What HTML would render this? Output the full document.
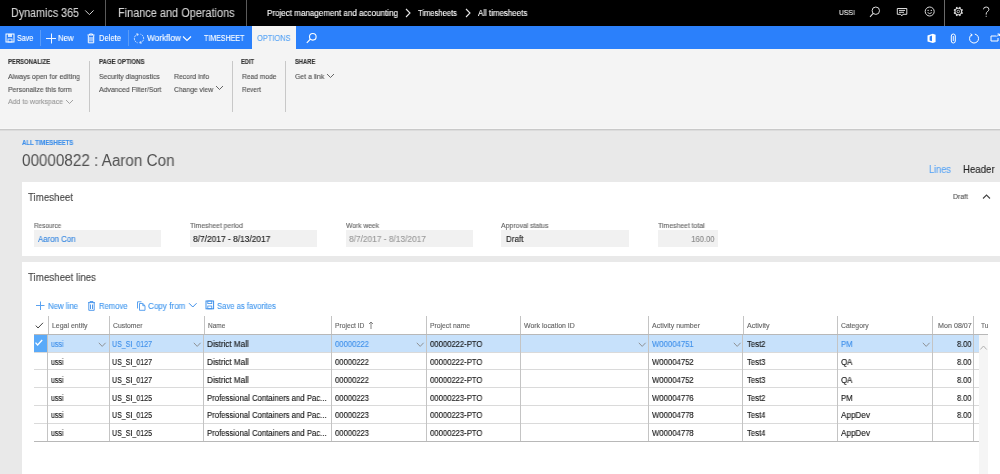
<!DOCTYPE html>
<html><head><meta charset="utf-8"><style>
html,body{margin:0;padding:0;width:1000px;height:474px;overflow:hidden;background:#e9e9e9;}
body{position:relative;font-family:"Liberation Sans", sans-serif;}
</style></head><body>
<div style="position:absolute;left:0px;top:0px;width:1000px;height:26px;background:#000;"></div>
<div style="position:absolute;left:0px;top:26px;width:1000px;height:23px;background:#2b80fb;"></div>
<div style="position:absolute;left:252px;top:26px;width:44px;height:23px;background:#f4f4f4;"></div>
<div style="position:absolute;left:0px;top:49px;width:1000px;height:79px;background:#f4f4f4;"></div>
<div style="position:absolute;left:0px;top:128px;width:1000px;height:1px;background:#f7f7f7;"></div>
<div style="position:absolute;left:0px;top:129px;width:1000px;height:1px;background:#c9c9c9;"></div>
<div style="position:absolute;left:0px;top:130px;width:1000px;height:1px;background:#dcdcdc;"></div>
<svg style="position:absolute;left:84px;top:9px;" width="12" height="8" viewBox="0 0 12 8"><path d="M1.2 1.4 L5.4 5.6 L9.6 1.4" stroke="#d4d4d4" stroke-width="1" fill="none"/></svg>
<div style="position:absolute;left:105px;top:0px;width:1px;height:26px;background:#5a5a5a;"></div>
<div style="position:absolute;left:246px;top:0px;width:1px;height:26px;background:#5a5a5a;"></div>
<svg style="position:absolute;left:404px;top:7px;" width="8" height="12" viewBox="0 0 8 12"><path d="M2 2 L6 6 L2 10" stroke="#e8e8e8" stroke-width="1.1" fill="none"/></svg>
<svg style="position:absolute;left:464px;top:7px;" width="8" height="12" viewBox="0 0 8 12"><path d="M2 2 L6 6 L2 10" stroke="#e8e8e8" stroke-width="1.1" fill="none"/></svg>
<svg style="position:absolute;left:868px;top:6px;" width="14" height="13" viewBox="0 0 14 13"><circle cx="7.8" cy="4.7" r="3.7" stroke="#dcdcdc" stroke-width="1" fill="none"/><path d="M5.2 7.4 L2 10.8" stroke="#dcdcdc" stroke-width="1.1"/></svg>
<svg style="position:absolute;left:896px;top:7px;" width="13" height="11" viewBox="0 0 13 11"><path d="M1.3 1.5 H10.8 V7.3 H6.9 L5.8 8.9 L4.7 7.3 H1.3 Z" stroke="#dcdcdc" stroke-width="1" fill="none"/><path d="M3 3.4 H9 M3 5.3 H8" stroke="#dcdcdc" stroke-width="1"/></svg>
<svg style="position:absolute;left:924px;top:6px;" width="12" height="12" viewBox="0 0 12 12"><circle cx="5.7" cy="5.5" r="4.5" stroke="#dcdcdc" stroke-width="1" fill="none"/><circle cx="4.1" cy="4.4" r="0.65" fill="#dcdcdc"/><circle cx="7.3" cy="4.4" r="0.65" fill="#dcdcdc"/><path d="M3.6 6.6 Q5.7 8.6 7.8 6.6" stroke="#dcdcdc" stroke-width="0.9" fill="none"/></svg>
<div style="position:absolute;left:944px;top:0px;width:1px;height:26px;background:#6a6a6a;"></div>
<svg style="position:absolute;left:952px;top:6px;" width="13" height="12" viewBox="0 0 13 12"><path d="M10.15 6.11 L10.95 6.69 L10.43 7.94 L9.46 7.79 L8.59 8.66 L8.74 9.63 L7.49 10.15 L6.91 9.35 L5.69 9.35 L5.11 10.15 L3.86 9.63 L4.01 8.66 L3.14 7.79 L2.17 7.94 L1.65 6.69 L2.45 6.11 L2.45 4.89 L1.65 4.31 L2.17 3.06 L3.14 3.21 L4.01 2.34 L3.86 1.37 L5.11 0.85 L5.69 1.65 L6.91 1.65 L7.49 0.85 L8.74 1.37 L8.59 2.34 L9.46 3.21 L10.43 3.06 L10.95 4.31 L10.15 4.89 Z M9.00 5.5 A2.7 2.7 0 1 0 3.60 5.5 A2.7 2.7 0 1 0 9.00 5.5 Z" fill="#d8d8d8" fill-rule="evenodd"/><circle cx="6.3" cy="5.5" r="1.3" stroke="#d8d8d8" stroke-width="0.9" fill="none"/></svg>
<svg style="position:absolute;left:982px;top:6px;" width="9" height="12" viewBox="0 0 9 12"><path d="M1.5 3.3 Q1.5 1 4.2 1 Q6.9 1 6.9 3.3 Q6.9 4.8 5.2 5.8 Q4.2 6.5 4.2 8 V8.6" stroke="#dcdcdc" stroke-width="1" fill="none"/><rect x="3.7" y="9.8" width="1" height="1" fill="#dcdcdc"/></svg>
<svg style="position:absolute;left:5px;top:33px;" width="10" height="10" viewBox="0 0 10 10"><rect x="1" y="1" width="8" height="8" stroke="#fff" stroke-width="1" fill="none"/><rect x="3" y="1" width="4" height="3" fill="#fff" opacity="0.8"/><rect x="3" y="6" width="4" height="3" stroke="#fff" stroke-width="0.8" fill="none"/></svg>
<div style="position:absolute;left:40px;top:30px;width:1px;height:16px;background:#5a9cf8;"></div>
<svg style="position:absolute;left:45px;top:33px;" width="12" height="11" viewBox="0 0 12 11"><path d="M6.5 0.5 V10.5 M1 5.5 H11" stroke="#f0f6ff" stroke-width="1"/></svg>
<svg style="position:absolute;left:86px;top:33px;" width="10" height="11" viewBox="0 0 10 11"><path d="M1.5 2 H8.5 M3.5 2 V1 H6.5 V2 M2.3 2.5 V9.8 H7.7 V2.5 M4 4 V8.5 M6 4 V8.5" stroke="#fff" stroke-width="1" fill="none"/></svg>
<div style="position:absolute;left:128px;top:30px;width:1px;height:16px;background:#5a9cf8;"></div>
<svg style="position:absolute;left:133px;top:33px;" width="12" height="12" viewBox="0 0 12 12"><path d="M5.2 1.2 A4.4 4.4 0 0 0 4.6 9.8 M6.8 9.8 A4.4 4.4 0 0 0 7.4 1.2" stroke="#e6f0ff" stroke-width="0.9" fill="none" stroke-dasharray="2 0.8"/><path d="M3.4 0.7 L5.2 1.2 L4.5 2.8 M8.6 10.3 L6.8 9.8 L7.5 8.2" stroke="#e6f0ff" stroke-width="0.8" fill="none"/></svg>
<svg style="position:absolute;left:182px;top:35px;" width="10" height="7" viewBox="0 0 10 7"><path d="M1 1.5 L5 5.5 L9 1.5" stroke="#fff" stroke-width="1.1" fill="none"/></svg>
<svg style="position:absolute;left:305px;top:32px;" width="13" height="12" viewBox="0 0 13 12"><circle cx="7.8" cy="4.8" r="3.3" stroke="#fff" stroke-width="1.1" fill="none"/><path d="M5.4 7.2 L1.8 10.8" stroke="#fff" stroke-width="1.2"/></svg>
<svg style="position:absolute;left:926px;top:33px;" width="11" height="11" viewBox="0 0 11 11"><path d="M1.5 2.6 L6.8 0.8 L9.6 1.8 V9 L6.8 10 L1.5 8.4 Z" fill="#fff"/><path d="M3.6 3.4 L6 2.6 V8.3 L3.6 7.6 Z" fill="#2b80fb"/></svg>
<svg style="position:absolute;left:950px;top:33px;" width="7" height="11" viewBox="0 0 7 11"><rect x="1.3" y="1" width="4" height="9" rx="2" stroke="#fff" stroke-width="1" fill="none"/><path d="M3.3 3 V8" stroke="#fff" stroke-width="0.9"/></svg>
<svg style="position:absolute;left:968px;top:33px;" width="12" height="11" viewBox="0 0 12 11"><path d="M6.8 1.1 A4.5 4.5 0 1 1 3.4 1.9" stroke="#fff" stroke-width="1" fill="none"/><path d="M2.5 0.8 L4.2 1.8 L3.0 3.4" stroke="#fff" stroke-width="1" fill="none"/></svg>
<svg style="position:absolute;left:990px;top:33px;" width="10" height="9" viewBox="0 0 10 9"><path d="M1 3 H6.5 M1 3 V8 H8 V5" stroke="#fff" stroke-width="1" fill="none"/><path d="M7 3.5 L9.5 1 M7.5 1 H9.5 V3" stroke="#fff" stroke-width="1" fill="none"/></svg>
<svg style="position:absolute;left:65px;top:98.5px;" width="10" height="6" viewBox="0 0 10 6"><path d="M1 1 L4.5 4.5 L8 1" stroke="#999" stroke-width="0.9" fill="none"/></svg>
<div style="position:absolute;left:89px;top:61px;width:1px;height:51px;background:#c8c8c8;"></div>
<svg style="position:absolute;left:214.8px;top:85.2px;" width="10" height="6" viewBox="0 0 10 6"><path d="M1 1 L4.5 4.5 L8 1" stroke="#555" stroke-width="0.9" fill="none"/></svg>
<div style="position:absolute;left:232px;top:61px;width:1px;height:51px;background:#c8c8c8;"></div>
<div style="position:absolute;left:285px;top:61px;width:1px;height:51px;background:#c8c8c8;"></div>
<svg style="position:absolute;left:325.7px;top:72.6px;" width="10" height="6" viewBox="0 0 10 6"><path d="M1 1 L4.5 4.5 L8 1" stroke="#555" stroke-width="0.9" fill="none"/></svg>
<div style="position:absolute;left:22px;top:182px;width:978px;height:74px;background:#fff;"></div>
<svg style="position:absolute;left:982px;top:193px;" width="10" height="7" viewBox="0 0 10 7"><path d="M1 5.5 L4.5 2 L8 5.5" stroke="#444" stroke-width="1.1" fill="none"/></svg>
<div style="position:absolute;left:33.6px;top:230px;width:127.4px;height:17px;background:#f1f1f1;"></div>
<div style="position:absolute;left:189.6px;top:230px;width:127.6px;height:16.5px;background:#f1f1f1;"></div>
<div style="position:absolute;left:345.8px;top:230px;width:127px;height:16.5px;background:#f1f1f1;"></div>
<div style="position:absolute;left:501.2px;top:230px;width:127.5px;height:17px;background:#f1f1f1;"></div>
<div style="position:absolute;left:657.5px;top:230px;width:60.5px;height:17px;background:#f1f1f1;"></div>
<div style="position:absolute;left:22px;top:262px;width:978px;height:212px;background:#fff;"></div>
<svg style="position:absolute;left:35px;top:301px;" width="10" height="10" viewBox="0 0 10 10"><path d="M5.5 0.5 V9 M1 4.5 H9.5" stroke="#5aa2f0" stroke-width="1"/></svg>
<svg style="position:absolute;left:87px;top:301px;" width="9" height="10" viewBox="0 0 9 10"><path d="M1 1.6 H8 M3 1.6 V0.6 H6 V1.6 M1.8 2 V9.3 H7.2 V2 M3.5 3.5 V8 M5.5 3.5 V8" stroke="#3d8fea" stroke-width="0.9" fill="none"/></svg>
<svg style="position:absolute;left:136px;top:301px;" width="10" height="10" viewBox="0 0 10 10"><path d="M1.5 7.5 V0.8 H5.5 M3.5 2.5 H6.8 L9 4.7 V9.3 H3.5 Z M6.8 2.5 V4.7 H9" stroke="#4a98ee" stroke-width="0.9" fill="none"/></svg>
<svg style="position:absolute;left:187.5px;top:302px;" width="10" height="7" viewBox="0 0 10 7"><path d="M1 1.2 L4.8 5 L8.6 1.2" stroke="#3d8fea" stroke-width="1" fill="none"/></svg>
<svg style="position:absolute;left:205px;top:300px;" width="10" height="10" viewBox="0 0 10 10"><rect x="1" y="1" width="7.6" height="7.8" stroke="#3d8fea" stroke-width="1" fill="none"/><rect x="2.8" y="1" width="4" height="2.6" stroke="#3d8fea" stroke-width="0.8" fill="none"/><rect x="2.8" y="6" width="4" height="2.8" stroke="#3d8fea" stroke-width="0.8" fill="none"/></svg>
<div style="position:absolute;left:48px;top:316px;width:1px;height:18px;background:#c4c4c4;"></div>
<div style="position:absolute;left:109px;top:316px;width:1px;height:18px;background:#c4c4c4;"></div>
<div style="position:absolute;left:204px;top:316px;width:1px;height:18px;background:#c4c4c4;"></div>
<div style="position:absolute;left:331px;top:316px;width:1px;height:18px;background:#c4c4c4;"></div>
<div style="position:absolute;left:426px;top:316px;width:1px;height:18px;background:#c4c4c4;"></div>
<div style="position:absolute;left:520px;top:316px;width:1px;height:18px;background:#c4c4c4;"></div>
<div style="position:absolute;left:648px;top:316px;width:1px;height:18px;background:#c4c4c4;"></div>
<div style="position:absolute;left:743px;top:316px;width:1px;height:18px;background:#c4c4c4;"></div>
<div style="position:absolute;left:837px;top:316px;width:1px;height:18px;background:#c4c4c4;"></div>
<div style="position:absolute;left:932px;top:316px;width:1px;height:18px;background:#c4c4c4;"></div>
<div style="position:absolute;left:973px;top:316px;width:1px;height:18px;background:#c4c4c4;"></div>
<div style="position:absolute;left:34px;top:335px;width:945px;height:17px;background:#c7e1fb;"></div>
<div style="position:absolute;left:34px;top:335px;width:13px;height:17px;background:#5aaaf9;"></div>
<div style="position:absolute;left:34px;top:334px;width:954px;height:1px;background:#b8b8b8;"></div>
<div style="position:absolute;left:34px;top:352px;width:945px;height:1px;background:#dadada;"></div>
<div style="position:absolute;left:34px;top:369px;width:945px;height:1px;background:#dadada;"></div>
<div style="position:absolute;left:34px;top:387px;width:945px;height:1px;background:#dadada;"></div>
<div style="position:absolute;left:34px;top:405px;width:945px;height:1px;background:#dadada;"></div>
<div style="position:absolute;left:34px;top:423px;width:945px;height:1px;background:#dadada;"></div>
<div style="position:absolute;left:34px;top:441px;width:945px;height:1px;background:#b8b8b8;"></div>
<div style="position:absolute;left:47px;top:335px;width:1px;height:106px;background:#c4c4c4;"></div>
<div style="position:absolute;left:109px;top:335px;width:1px;height:106px;background:#c4c4c4;"></div>
<div style="position:absolute;left:203px;top:335px;width:1px;height:106px;background:#c4c4c4;"></div>
<div style="position:absolute;left:331px;top:335px;width:1px;height:106px;background:#c4c4c4;"></div>
<div style="position:absolute;left:426px;top:335px;width:1px;height:106px;background:#c4c4c4;"></div>
<div style="position:absolute;left:520px;top:335px;width:1px;height:106px;background:#c4c4c4;"></div>
<div style="position:absolute;left:648px;top:335px;width:1px;height:106px;background:#c4c4c4;"></div>
<div style="position:absolute;left:742px;top:335px;width:1px;height:106px;background:#c4c4c4;"></div>
<div style="position:absolute;left:837px;top:335px;width:1px;height:106px;background:#c4c4c4;"></div>
<div style="position:absolute;left:932px;top:335px;width:1px;height:106px;background:#c4c4c4;"></div>
<div style="position:absolute;left:973px;top:335px;width:1px;height:106px;background:#c4c4c4;"></div>
<div style="position:absolute;left:979px;top:335px;width:9px;height:139px;background:#f5f5f5;"></div>
<svg style="position:absolute;left:979px;top:344px;" width="9" height="7" viewBox="0 0 9 7"><path d="M1.3 5.5 L4.5 2 L7.7 5.5" stroke="#b0b0b0" stroke-width="1" fill="none"/></svg>
<svg style="position:absolute;left:35px;top:322px;" width="9" height="8" viewBox="0 0 9 8"><path d="M0.8 3.6 L3 6 L8 0.8" stroke="#444" stroke-width="1" fill="none"/></svg>
<svg style="position:absolute;left:368px;top:321px;" width="6" height="9" viewBox="0 0 6 9"><path d="M3 1 V8 M1 3 L3 1 L5 3" stroke="#777" stroke-width="0.9" fill="none"/></svg>
<svg style="position:absolute;left:34px;top:339px;" width="13" height="8" viewBox="0 0 13 8"><path d="M1.5 3.6 L3.6 6 L8.2 1" stroke="#fff" stroke-width="1.3" fill="none"/></svg>
<svg style="position:absolute;left:98px;top:341.5px;" width="9" height="6" viewBox="0 0 9 6"><path d="M0.8 0.8 L4.2 4.4 L7.6 0.8" stroke="#888" stroke-width="0.9" fill="none"/></svg>
<svg style="position:absolute;left:192.6px;top:341.5px;" width="9" height="6" viewBox="0 0 9 6"><path d="M0.8 0.8 L4.2 4.4 L7.6 0.8" stroke="#888" stroke-width="0.9" fill="none"/></svg>
<svg style="position:absolute;left:415.6px;top:341.5px;" width="9" height="6" viewBox="0 0 9 6"><path d="M0.8 0.8 L4.2 4.4 L7.6 0.8" stroke="#888" stroke-width="0.9" fill="none"/></svg>
<svg style="position:absolute;left:638.2px;top:341.5px;" width="9" height="6" viewBox="0 0 9 6"><path d="M0.8 0.8 L4.2 4.4 L7.6 0.8" stroke="#888" stroke-width="0.9" fill="none"/></svg>
<svg style="position:absolute;left:732.5px;top:341.5px;" width="9" height="6" viewBox="0 0 9 6"><path d="M0.8 0.8 L4.2 4.4 L7.6 0.8" stroke="#888" stroke-width="0.9" fill="none"/></svg>
<svg style="position:absolute;left:922px;top:341.5px;" width="9" height="6" viewBox="0 0 9 6"><path d="M0.8 0.8 L4.2 4.4 L7.6 0.8" stroke="#888" stroke-width="0.9" fill="none"/></svg>
<div style="position:absolute;left:11.00px;top:6.94px;font-size:12px;line-height:12px;height:12px;color:#d4d4d4;font-weight:400;white-space:pre;will-change:transform;-webkit-text-stroke:0.12px #d4d4d4;transform:scaleX(0.8944);transform-origin:left top;">Dynamics 365</div>
<div style="position:absolute;left:117.80px;top:6.84px;font-size:12px;line-height:12px;height:12px;color:#d4d4d4;font-weight:400;white-space:pre;will-change:transform;-webkit-text-stroke:0.12px #d4d4d4;transform:scaleX(0.9103);transform-origin:left top;">Finance and Operations</div>
<div style="position:absolute;left:267.00px;top:9.00px;font-size:8.5px;line-height:8.5px;height:8.5px;color:#fff;font-weight:400;white-space:pre;will-change:transform;-webkit-text-stroke:0.12px #fff;transform:scaleX(0.9462);transform-origin:left top;">Project management and accounting</div>
<div style="position:absolute;left:418.00px;top:9.00px;font-size:8.5px;line-height:8.5px;height:8.5px;color:#fff;font-weight:400;white-space:pre;will-change:transform;-webkit-text-stroke:0.12px #fff;transform:scaleX(0.8940);transform-origin:left top;">Timesheets</div>
<div style="position:absolute;left:477.70px;top:9.00px;font-size:8.5px;line-height:8.5px;height:8.5px;color:#fff;font-weight:400;white-space:pre;will-change:transform;-webkit-text-stroke:0.12px #fff;transform:scaleX(0.9316);transform-origin:left top;">All timesheets</div>
<div style="position:absolute;left:838.80px;top:9.33px;font-size:8px;line-height:8px;height:8px;color:#eee;font-weight:400;white-space:pre;will-change:transform;-webkit-text-stroke:0.12px #eee;transform:scaleX(0.8569);transform-origin:left top;">USSI</div>
<div style="position:absolute;left:16.80px;top:33.88px;font-size:9px;line-height:9px;height:9px;color:#fff;font-weight:400;white-space:pre;will-change:transform;-webkit-text-stroke:0.12px #fff;transform:scaleX(0.7896);transform-origin:left top;">Save</div>
<div style="position:absolute;left:58.40px;top:33.88px;font-size:9px;line-height:9px;height:9px;color:#fff;font-weight:400;white-space:pre;will-change:transform;-webkit-text-stroke:0.12px #fff;transform:scaleX(0.8659);transform-origin:left top;">New</div>
<div style="position:absolute;left:99.00px;top:33.88px;font-size:9px;line-height:9px;height:9px;color:#fff;font-weight:400;white-space:pre;will-change:transform;-webkit-text-stroke:0.12px #fff;transform:scaleX(0.8456);transform-origin:left top;">Delete</div>
<div style="position:absolute;left:146.60px;top:33.88px;font-size:9px;line-height:9px;height:9px;color:#fff;font-weight:400;white-space:pre;will-change:transform;-webkit-text-stroke:0.12px #fff;transform:scaleX(0.9228);transform-origin:left top;">Workflow</div>
<div style="position:absolute;left:204.00px;top:33.88px;font-size:9px;line-height:9px;height:9px;color:#fff;font-weight:400;white-space:pre;will-change:transform;-webkit-text-stroke:0.12px #fff;transform:scaleX(0.7842);transform-origin:left top;">TIMESHEET</div>
<div style="position:absolute;left:257.00px;top:33.88px;font-size:9px;line-height:9px;height:9px;color:#5aa5f5;font-weight:400;white-space:pre;will-change:transform;-webkit-text-stroke:0.12px #5aa5f5;transform:scaleX(0.8293);transform-origin:left top;">OPTIONS</div>
<div style="position:absolute;left:7.60px;top:58.50px;font-size:6.5px;line-height:6.5px;height:6.5px;color:#333;font-weight:700;white-space:pre;will-change:transform;-webkit-text-stroke:0.12px #333;transform:scaleX(0.9084);transform-origin:left top;">PERSONALIZE</div>
<div style="position:absolute;left:8.00px;top:72.85px;font-size:7.5px;line-height:7.5px;height:7.5px;color:#505050;font-weight:400;white-space:pre;will-change:transform;-webkit-text-stroke:0.12px #505050;transform:scaleX(0.9285);transform-origin:left top;">Always open for editing</div>
<div style="position:absolute;left:8.00px;top:85.75px;font-size:7.5px;line-height:7.5px;height:7.5px;color:#505050;font-weight:400;white-space:pre;will-change:transform;-webkit-text-stroke:0.12px #505050;transform:scaleX(0.9082);transform-origin:left top;">Personalize this form</div>
<div style="position:absolute;left:8.00px;top:98.35px;font-size:7.5px;line-height:7.5px;height:7.5px;color:#999;font-weight:400;white-space:pre;will-change:transform;-webkit-text-stroke:0.12px #999;transform:scaleX(0.9224);transform-origin:left top;">Add to workspace</div>
<div style="position:absolute;left:98.60px;top:58.50px;font-size:6.5px;line-height:6.5px;height:6.5px;color:#333;font-weight:700;white-space:pre;will-change:transform;-webkit-text-stroke:0.12px #333;transform:scaleX(0.9265);transform-origin:left top;">PAGE OPTIONS</div>
<div style="position:absolute;left:98.60px;top:72.85px;font-size:7.5px;line-height:7.5px;height:7.5px;color:#505050;font-weight:400;white-space:pre;will-change:transform;-webkit-text-stroke:0.12px #505050;transform:scaleX(0.9100);transform-origin:left top;">Security diagnostics</div>
<div style="position:absolute;left:98.60px;top:85.75px;font-size:7.5px;line-height:7.5px;height:7.5px;color:#505050;font-weight:400;white-space:pre;will-change:transform;-webkit-text-stroke:0.12px #505050;transform:scaleX(0.9183);transform-origin:left top;">Advanced Filter/Sort</div>
<div style="position:absolute;left:174.00px;top:72.85px;font-size:7.5px;line-height:7.5px;height:7.5px;color:#505050;font-weight:400;white-space:pre;will-change:transform;-webkit-text-stroke:0.12px #505050;transform:scaleX(0.9150);transform-origin:left top;">Record info</div>
<div style="position:absolute;left:174.00px;top:85.75px;font-size:7.5px;line-height:7.5px;height:7.5px;color:#505050;font-weight:400;white-space:pre;will-change:transform;-webkit-text-stroke:0.12px #505050;transform:scaleX(0.9018);transform-origin:left top;">Change view</div>
<div style="position:absolute;left:241.00px;top:58.50px;font-size:6.5px;line-height:6.5px;height:6.5px;color:#333;font-weight:700;white-space:pre;will-change:transform;-webkit-text-stroke:0.12px #333;transform:scaleX(0.8844);transform-origin:left top;">EDIT</div>
<div style="position:absolute;left:241.50px;top:72.85px;font-size:7.5px;line-height:7.5px;height:7.5px;color:#505050;font-weight:400;white-space:pre;will-change:transform;-webkit-text-stroke:0.12px #505050;transform:scaleX(0.8896);transform-origin:left top;">Read mode</div>
<div style="position:absolute;left:241.50px;top:85.75px;font-size:7.5px;line-height:7.5px;height:7.5px;color:#505050;font-weight:400;white-space:pre;will-change:transform;-webkit-text-stroke:0.12px #505050;transform:scaleX(0.8554);transform-origin:left top;">Revert</div>
<div style="position:absolute;left:294.60px;top:58.50px;font-size:6.5px;line-height:6.5px;height:6.5px;color:#333;font-weight:700;white-space:pre;will-change:transform;-webkit-text-stroke:0.12px #333;transform:scaleX(0.8873);transform-origin:left top;">SHARE</div>
<div style="position:absolute;left:294.60px;top:72.85px;font-size:7.5px;line-height:7.5px;height:7.5px;color:#505050;font-weight:400;white-space:pre;will-change:transform;-webkit-text-stroke:0.12px #505050;transform:scaleX(0.9215);transform-origin:left top;">Get a link</div>
<div style="position:absolute;left:21.80px;top:139.90px;font-size:6.5px;line-height:6.5px;height:6.5px;color:#3d8fea;font-weight:700;white-space:pre;will-change:transform;-webkit-text-stroke:0.12px #3d8fea;transform:scaleX(0.9166);transform-origin:left top;">ALL TIMESHEETS</div>
<div style="position:absolute;left:21.80px;top:152.79px;font-size:15.6px;line-height:15.6px;height:15.6px;color:#505050;font-weight:400;white-space:pre;will-change:transform;-webkit-text-stroke:0px #505050;transform:scaleX(0.9771);transform-origin:left top;">00000822 : Aaron Con</div>
<div style="position:absolute;left:928.50px;top:163.69px;font-size:11px;line-height:11px;height:11px;color:#5aa5f5;font-weight:400;white-space:pre;will-change:transform;-webkit-text-stroke:0.12px #5aa5f5;transform:scaleX(0.8328);transform-origin:left top;">Lines</div>
<div style="position:absolute;left:962.70px;top:163.69px;font-size:11px;line-height:11px;height:11px;color:#222;font-weight:400;white-space:pre;will-change:transform;-webkit-text-stroke:0.12px #222;transform:scaleX(0.8759);transform-origin:left top;">Header</div>
<div style="position:absolute;left:28.20px;top:191.79px;font-size:11px;line-height:11px;height:11px;color:#444;font-weight:400;white-space:pre;will-change:transform;-webkit-text-stroke:0.12px #444;transform:scaleX(0.8832);transform-origin:left top;">Timesheet</div>
<div style="position:absolute;left:952.90px;top:193.27px;font-size:7px;line-height:7px;height:7px;color:#555;font-weight:400;white-space:pre;will-change:transform;-webkit-text-stroke:0.12px #555;transform:scaleX(0.9755);transform-origin:left top;">Draft</div>
<div style="position:absolute;left:33.60px;top:222.27px;font-size:7px;line-height:7px;height:7px;color:#666;font-weight:400;white-space:pre;will-change:transform;-webkit-text-stroke:0.12px #666;transform:scaleX(0.9109);transform-origin:left top;">Resource</div>
<div style="position:absolute;left:37.80px;top:235.38px;font-size:9px;line-height:9px;height:9px;color:#3486e0;font-weight:400;white-space:pre;will-change:transform;-webkit-text-stroke:0.12px #3486e0;transform:scaleX(0.8715);transform-origin:left top;">Aaron Con</div>
<div style="position:absolute;left:189.60px;top:222.27px;font-size:7px;line-height:7px;height:7px;color:#666;font-weight:400;white-space:pre;will-change:transform;-webkit-text-stroke:0.12px #666;transform:scaleX(0.9828);transform-origin:left top;">Timesheet period</div>
<div style="position:absolute;left:192.60px;top:235.38px;font-size:9px;line-height:9px;height:9px;color:#222;font-weight:400;white-space:pre;will-change:transform;-webkit-text-stroke:0.15px #222;transform:scaleX(0.9317);transform-origin:left top;">8/7/2017 - 8/13/2017</div>
<div style="position:absolute;left:345.80px;top:222.27px;font-size:7px;line-height:7px;height:7px;color:#666;font-weight:400;white-space:pre;will-change:transform;-webkit-text-stroke:0.12px #666;transform:scaleX(0.9565);transform-origin:left top;">Work week</div>
<div style="position:absolute;left:349.00px;top:235.38px;font-size:9px;line-height:9px;height:9px;color:#999;font-weight:400;white-space:pre;will-change:transform;-webkit-text-stroke:0.12px #999;transform:scaleX(0.9268);transform-origin:left top;">8/7/2017 - 8/13/2017</div>
<div style="position:absolute;left:501.20px;top:222.27px;font-size:7px;line-height:7px;height:7px;color:#666;font-weight:400;white-space:pre;will-change:transform;-webkit-text-stroke:0.12px #666;transform:scaleX(0.9845);transform-origin:left top;">Approval status</div>
<div style="position:absolute;left:505.50px;top:235.38px;font-size:9px;line-height:9px;height:9px;color:#222;font-weight:400;white-space:pre;will-change:transform;-webkit-text-stroke:0.15px #222;transform:scaleX(0.8967);transform-origin:left top;">Draft</div>
<div style="position:absolute;left:657.50px;top:222.27px;font-size:7px;line-height:7px;height:7px;color:#666;font-weight:400;white-space:pre;will-change:transform;-webkit-text-stroke:0.12px #666;transform:scaleX(0.9809);transform-origin:left top;">Timesheet total</div>
<div style="position:absolute;left:686.97px;top:235.38px;font-size:9px;line-height:9px;height:9px;color:#888;font-weight:400;white-space:pre;will-change:transform;-webkit-text-stroke:0.12px #888;transform:scaleX(0.8463);transform-origin:right top;">160.00</div>
<div style="position:absolute;left:28.00px;top:271.59px;font-size:11px;line-height:11px;height:11px;color:#444;font-weight:400;white-space:pre;will-change:transform;-webkit-text-stroke:0.12px #444;transform:scaleX(0.8874);transform-origin:left top;">Timesheet lines</div>
<div style="position:absolute;left:47.90px;top:301.60px;font-size:8.5px;line-height:8.5px;height:8.5px;color:#4197ee;font-weight:400;white-space:pre;will-change:transform;-webkit-text-stroke:0.12px #4197ee;transform:scaleX(0.9230);transform-origin:left top;">New line</div>
<div style="position:absolute;left:98.70px;top:301.60px;font-size:8.5px;line-height:8.5px;height:8.5px;color:#4197ee;font-weight:400;white-space:pre;will-change:transform;-webkit-text-stroke:0.12px #4197ee;transform:scaleX(0.9003);transform-origin:left top;">Remove</div>
<div style="position:absolute;left:147.60px;top:301.60px;font-size:8.5px;line-height:8.5px;height:8.5px;color:#4197ee;font-weight:400;white-space:pre;will-change:transform;-webkit-text-stroke:0.12px #4197ee;transform:scaleX(0.9536);transform-origin:left top;">Copy from</div>
<div style="position:absolute;left:216.60px;top:301.60px;font-size:8.5px;line-height:8.5px;height:8.5px;color:#4197ee;font-weight:400;white-space:pre;will-change:transform;-webkit-text-stroke:0.12px #4197ee;transform:scaleX(0.9018);transform-origin:left top;">Save as favorites</div>
<div style="position:absolute;left:51.70px;top:323.10px;font-size:6.5px;line-height:6.5px;height:6.5px;color:#666;font-weight:400;white-space:pre;will-change:transform;-webkit-text-stroke:0.12px #666;transform:scaleX(1.0707);transform-origin:left top;">Legal entity</div>
<div style="position:absolute;left:112.90px;top:323.10px;font-size:6.5px;line-height:6.5px;height:6.5px;color:#666;font-weight:400;white-space:pre;will-change:transform;-webkit-text-stroke:0.12px #666;transform:scaleX(1.0501);transform-origin:left top;">Customer</div>
<div style="position:absolute;left:207.80px;top:323.10px;font-size:6.5px;line-height:6.5px;height:6.5px;color:#666;font-weight:400;white-space:pre;will-change:transform;-webkit-text-stroke:0.12px #666;transform:scaleX(0.9975);transform-origin:left top;">Name</div>
<div style="position:absolute;left:335.00px;top:323.10px;font-size:6.5px;line-height:6.5px;height:6.5px;color:#666;font-weight:400;white-space:pre;will-change:transform;-webkit-text-stroke:0.12px #666;transform:scaleX(1.0299);transform-origin:left top;">Project ID</div>
<div style="position:absolute;left:429.60px;top:323.10px;font-size:6.5px;line-height:6.5px;height:6.5px;color:#666;font-weight:400;white-space:pre;will-change:transform;-webkit-text-stroke:0.12px #666;transform:scaleX(1.0445);transform-origin:left top;">Project name</div>
<div style="position:absolute;left:524.20px;top:323.10px;font-size:6.5px;line-height:6.5px;height:6.5px;color:#666;font-weight:400;white-space:pre;will-change:transform;-webkit-text-stroke:0.12px #666;transform:scaleX(1.0677);transform-origin:left top;">Work location ID</div>
<div style="position:absolute;left:652.00px;top:323.10px;font-size:6.5px;line-height:6.5px;height:6.5px;color:#666;font-weight:400;white-space:pre;will-change:transform;-webkit-text-stroke:0.12px #666;transform:scaleX(1.0802);transform-origin:left top;">Activity number</div>
<div style="position:absolute;left:746.50px;top:323.10px;font-size:6.5px;line-height:6.5px;height:6.5px;color:#666;font-weight:400;white-space:pre;will-change:transform;-webkit-text-stroke:0.12px #666;transform:scaleX(1.0926);transform-origin:left top;">Activity</div>
<div style="position:absolute;left:841.40px;top:323.10px;font-size:6.5px;line-height:6.5px;height:6.5px;color:#666;font-weight:400;white-space:pre;will-change:transform;-webkit-text-stroke:0.12px #666;transform:scaleX(1.0464);transform-origin:left top;">Category</div>
<div style="position:absolute;left:940.58px;top:323.10px;font-size:6.5px;line-height:6.5px;height:6.5px;color:#666;font-weight:400;white-space:pre;will-change:transform;-webkit-text-stroke:0.12px #666;transform:scaleX(1.0938);transform-origin:right top;">Mon 08/07</div>
<div style="position:absolute;left:980.80px;top:323.10px;font-size:6.5px;line-height:6.5px;height:6.5px;color:#666;font-weight:400;white-space:pre;will-change:transform;-webkit-text-stroke:0.12px #666;">Tu</div>
<div style="position:absolute;left:51.00px;top:340.20px;font-size:8.5px;line-height:8.5px;height:8.5px;color:#3d8fea;font-weight:400;white-space:pre;will-change:transform;-webkit-text-stroke:0.12px #3d8fea;transform:scaleX(0.8264);transform-origin:left top;">ussi</div>
<div style="position:absolute;left:112.40px;top:340.20px;font-size:8.5px;line-height:8.5px;height:8.5px;color:#3d8fea;font-weight:400;white-space:pre;will-change:transform;-webkit-text-stroke:0.12px #3d8fea;transform:scaleX(0.8298);transform-origin:left top;">US_SI_0127</div>
<div style="position:absolute;left:207.20px;top:340.20px;font-size:8.5px;line-height:8.5px;height:8.5px;color:#111;font-weight:400;white-space:pre;will-change:transform;-webkit-text-stroke:0.12px #111;transform:scaleX(0.9494);transform-origin:left top;">District Mall</div>
<div style="position:absolute;left:335.00px;top:340.20px;font-size:8.5px;line-height:8.5px;height:8.5px;color:#3d8fea;font-weight:400;white-space:pre;will-change:transform;-webkit-text-stroke:0.12px #3d8fea;transform:scaleX(0.8988);transform-origin:left top;">00000222</div>
<div style="position:absolute;left:429.60px;top:340.20px;font-size:8.5px;line-height:8.5px;height:8.5px;color:#111;font-weight:400;white-space:pre;will-change:transform;-webkit-text-stroke:0.12px #111;transform:scaleX(0.9039);transform-origin:left top;">00000222-PTO</div>
<div style="position:absolute;left:652.00px;top:340.20px;font-size:8.5px;line-height:8.5px;height:8.5px;color:#3d8fea;font-weight:400;white-space:pre;will-change:transform;-webkit-text-stroke:0.12px #3d8fea;transform:scaleX(0.9096);transform-origin:left top;">W00004751</div>
<div style="position:absolute;left:746.50px;top:340.20px;font-size:8.5px;line-height:8.5px;height:8.5px;color:#111;font-weight:400;white-space:pre;will-change:transform;-webkit-text-stroke:0.12px #111;transform:scaleX(0.9101);transform-origin:left top;">Test2</div>
<div style="position:absolute;left:841.40px;top:340.20px;font-size:8.5px;line-height:8.5px;height:8.5px;color:#3d8fea;font-weight:400;white-space:pre;will-change:transform;-webkit-text-stroke:0.12px #3d8fea;transform:scaleX(0.9020);transform-origin:left top;">PM</div>
<div style="position:absolute;left:954.95px;top:340.20px;font-size:8.5px;line-height:8.5px;height:8.5px;color:#111;font-weight:400;white-space:pre;will-change:transform;-webkit-text-stroke:0.12px #111;transform:scaleX(0.8763);transform-origin:right top;">8.00</div>
<div style="position:absolute;left:51.00px;top:357.60px;font-size:8.5px;line-height:8.5px;height:8.5px;color:#111;font-weight:400;white-space:pre;will-change:transform;-webkit-text-stroke:0.12px #111;transform:scaleX(0.8264);transform-origin:left top;">ussi</div>
<div style="position:absolute;left:112.40px;top:357.60px;font-size:8.5px;line-height:8.5px;height:8.5px;color:#111;font-weight:400;white-space:pre;will-change:transform;-webkit-text-stroke:0.12px #111;transform:scaleX(0.8298);transform-origin:left top;">US_SI_0127</div>
<div style="position:absolute;left:207.20px;top:357.60px;font-size:8.5px;line-height:8.5px;height:8.5px;color:#111;font-weight:400;white-space:pre;will-change:transform;-webkit-text-stroke:0.12px #111;transform:scaleX(0.9494);transform-origin:left top;">District Mall</div>
<div style="position:absolute;left:335.00px;top:357.60px;font-size:8.5px;line-height:8.5px;height:8.5px;color:#111;font-weight:400;white-space:pre;will-change:transform;-webkit-text-stroke:0.12px #111;transform:scaleX(0.8988);transform-origin:left top;">00000222</div>
<div style="position:absolute;left:429.60px;top:357.60px;font-size:8.5px;line-height:8.5px;height:8.5px;color:#111;font-weight:400;white-space:pre;will-change:transform;-webkit-text-stroke:0.12px #111;transform:scaleX(0.9039);transform-origin:left top;">00000222-PTO</div>
<div style="position:absolute;left:652.00px;top:357.60px;font-size:8.5px;line-height:8.5px;height:8.5px;color:#111;font-weight:400;white-space:pre;will-change:transform;-webkit-text-stroke:0.12px #111;transform:scaleX(0.9096);transform-origin:left top;">W00004752</div>
<div style="position:absolute;left:746.50px;top:357.60px;font-size:8.5px;line-height:8.5px;height:8.5px;color:#111;font-weight:400;white-space:pre;will-change:transform;-webkit-text-stroke:0.12px #111;transform:scaleX(0.9101);transform-origin:left top;">Test3</div>
<div style="position:absolute;left:841.40px;top:357.60px;font-size:8.5px;line-height:8.5px;height:8.5px;color:#111;font-weight:400;white-space:pre;will-change:transform;-webkit-text-stroke:0.12px #111;transform:scaleX(0.9364);transform-origin:left top;">QA</div>
<div style="position:absolute;left:954.95px;top:357.60px;font-size:8.5px;line-height:8.5px;height:8.5px;color:#111;font-weight:400;white-space:pre;will-change:transform;-webkit-text-stroke:0.12px #111;transform:scaleX(0.8763);transform-origin:right top;">8.00</div>
<div style="position:absolute;left:51.00px;top:375.70px;font-size:8.5px;line-height:8.5px;height:8.5px;color:#111;font-weight:400;white-space:pre;will-change:transform;-webkit-text-stroke:0.12px #111;transform:scaleX(0.8264);transform-origin:left top;">ussi</div>
<div style="position:absolute;left:112.40px;top:375.70px;font-size:8.5px;line-height:8.5px;height:8.5px;color:#111;font-weight:400;white-space:pre;will-change:transform;-webkit-text-stroke:0.12px #111;transform:scaleX(0.8298);transform-origin:left top;">US_SI_0127</div>
<div style="position:absolute;left:207.20px;top:375.70px;font-size:8.5px;line-height:8.5px;height:8.5px;color:#111;font-weight:400;white-space:pre;will-change:transform;-webkit-text-stroke:0.12px #111;transform:scaleX(0.9494);transform-origin:left top;">District Mall</div>
<div style="position:absolute;left:335.00px;top:375.70px;font-size:8.5px;line-height:8.5px;height:8.5px;color:#111;font-weight:400;white-space:pre;will-change:transform;-webkit-text-stroke:0.12px #111;transform:scaleX(0.8988);transform-origin:left top;">00000222</div>
<div style="position:absolute;left:429.60px;top:375.70px;font-size:8.5px;line-height:8.5px;height:8.5px;color:#111;font-weight:400;white-space:pre;will-change:transform;-webkit-text-stroke:0.12px #111;transform:scaleX(0.9039);transform-origin:left top;">00000222-PTO</div>
<div style="position:absolute;left:652.00px;top:375.70px;font-size:8.5px;line-height:8.5px;height:8.5px;color:#111;font-weight:400;white-space:pre;will-change:transform;-webkit-text-stroke:0.12px #111;transform:scaleX(0.9096);transform-origin:left top;">W00004752</div>
<div style="position:absolute;left:746.50px;top:375.70px;font-size:8.5px;line-height:8.5px;height:8.5px;color:#111;font-weight:400;white-space:pre;will-change:transform;-webkit-text-stroke:0.12px #111;transform:scaleX(0.9101);transform-origin:left top;">Test3</div>
<div style="position:absolute;left:841.40px;top:375.70px;font-size:8.5px;line-height:8.5px;height:8.5px;color:#111;font-weight:400;white-space:pre;will-change:transform;-webkit-text-stroke:0.12px #111;transform:scaleX(0.9364);transform-origin:left top;">QA</div>
<div style="position:absolute;left:954.95px;top:375.70px;font-size:8.5px;line-height:8.5px;height:8.5px;color:#111;font-weight:400;white-space:pre;will-change:transform;-webkit-text-stroke:0.12px #111;transform:scaleX(0.8763);transform-origin:right top;">8.00</div>
<div style="position:absolute;left:51.00px;top:393.90px;font-size:8.5px;line-height:8.5px;height:8.5px;color:#111;font-weight:400;white-space:pre;will-change:transform;-webkit-text-stroke:0.12px #111;transform:scaleX(0.8264);transform-origin:left top;">ussi</div>
<div style="position:absolute;left:112.40px;top:393.90px;font-size:8.5px;line-height:8.5px;height:8.5px;color:#111;font-weight:400;white-space:pre;will-change:transform;-webkit-text-stroke:0.12px #111;transform:scaleX(0.8298);transform-origin:left top;">US_SI_0125</div>
<div style="position:absolute;left:207.20px;top:393.90px;font-size:8.5px;line-height:8.5px;height:8.5px;color:#111;font-weight:400;white-space:pre;will-change:transform;-webkit-text-stroke:0.12px #111;transform:scaleX(0.9145);transform-origin:left top;">Professional Containers and Pac...</div>
<div style="position:absolute;left:335.00px;top:393.90px;font-size:8.5px;line-height:8.5px;height:8.5px;color:#111;font-weight:400;white-space:pre;will-change:transform;-webkit-text-stroke:0.12px #111;transform:scaleX(0.8988);transform-origin:left top;">00000223</div>
<div style="position:absolute;left:429.60px;top:393.90px;font-size:8.5px;line-height:8.5px;height:8.5px;color:#111;font-weight:400;white-space:pre;will-change:transform;-webkit-text-stroke:0.12px #111;transform:scaleX(0.9039);transform-origin:left top;">00000223-PTO</div>
<div style="position:absolute;left:652.00px;top:393.90px;font-size:8.5px;line-height:8.5px;height:8.5px;color:#111;font-weight:400;white-space:pre;will-change:transform;-webkit-text-stroke:0.12px #111;transform:scaleX(0.9096);transform-origin:left top;">W00004776</div>
<div style="position:absolute;left:746.50px;top:393.90px;font-size:8.5px;line-height:8.5px;height:8.5px;color:#111;font-weight:400;white-space:pre;will-change:transform;-webkit-text-stroke:0.12px #111;transform:scaleX(0.9101);transform-origin:left top;">Test2</div>
<div style="position:absolute;left:841.40px;top:393.90px;font-size:8.5px;line-height:8.5px;height:8.5px;color:#111;font-weight:400;white-space:pre;will-change:transform;-webkit-text-stroke:0.12px #111;transform:scaleX(0.9020);transform-origin:left top;">PM</div>
<div style="position:absolute;left:954.95px;top:393.90px;font-size:8.5px;line-height:8.5px;height:8.5px;color:#111;font-weight:400;white-space:pre;will-change:transform;-webkit-text-stroke:0.12px #111;transform:scaleX(0.8763);transform-origin:right top;">8.00</div>
<div style="position:absolute;left:51.00px;top:411.30px;font-size:8.5px;line-height:8.5px;height:8.5px;color:#111;font-weight:400;white-space:pre;will-change:transform;-webkit-text-stroke:0.12px #111;transform:scaleX(0.8264);transform-origin:left top;">ussi</div>
<div style="position:absolute;left:112.40px;top:411.30px;font-size:8.5px;line-height:8.5px;height:8.5px;color:#111;font-weight:400;white-space:pre;will-change:transform;-webkit-text-stroke:0.12px #111;transform:scaleX(0.8298);transform-origin:left top;">US_SI_0125</div>
<div style="position:absolute;left:207.20px;top:411.30px;font-size:8.5px;line-height:8.5px;height:8.5px;color:#111;font-weight:400;white-space:pre;will-change:transform;-webkit-text-stroke:0.12px #111;transform:scaleX(0.9145);transform-origin:left top;">Professional Containers and Pac...</div>
<div style="position:absolute;left:335.00px;top:411.30px;font-size:8.5px;line-height:8.5px;height:8.5px;color:#111;font-weight:400;white-space:pre;will-change:transform;-webkit-text-stroke:0.12px #111;transform:scaleX(0.8988);transform-origin:left top;">00000223</div>
<div style="position:absolute;left:429.60px;top:411.30px;font-size:8.5px;line-height:8.5px;height:8.5px;color:#111;font-weight:400;white-space:pre;will-change:transform;-webkit-text-stroke:0.12px #111;transform:scaleX(0.9039);transform-origin:left top;">00000223-PTO</div>
<div style="position:absolute;left:652.00px;top:411.30px;font-size:8.5px;line-height:8.5px;height:8.5px;color:#111;font-weight:400;white-space:pre;will-change:transform;-webkit-text-stroke:0.12px #111;transform:scaleX(0.9096);transform-origin:left top;">W00004778</div>
<div style="position:absolute;left:746.50px;top:411.30px;font-size:8.5px;line-height:8.5px;height:8.5px;color:#111;font-weight:400;white-space:pre;will-change:transform;-webkit-text-stroke:0.12px #111;transform:scaleX(0.9101);transform-origin:left top;">Test4</div>
<div style="position:absolute;left:841.40px;top:411.30px;font-size:8.5px;line-height:8.5px;height:8.5px;color:#111;font-weight:400;white-space:pre;will-change:transform;-webkit-text-stroke:0.12px #111;transform:scaleX(0.9587);transform-origin:left top;">AppDev</div>
<div style="position:absolute;left:954.95px;top:411.30px;font-size:8.5px;line-height:8.5px;height:8.5px;color:#111;font-weight:400;white-space:pre;will-change:transform;-webkit-text-stroke:0.12px #111;transform:scaleX(0.8763);transform-origin:right top;">8.00</div>
<div style="position:absolute;left:51.00px;top:428.90px;font-size:8.5px;line-height:8.5px;height:8.5px;color:#111;font-weight:400;white-space:pre;will-change:transform;-webkit-text-stroke:0.12px #111;transform:scaleX(0.8264);transform-origin:left top;">ussi</div>
<div style="position:absolute;left:112.40px;top:428.90px;font-size:8.5px;line-height:8.5px;height:8.5px;color:#111;font-weight:400;white-space:pre;will-change:transform;-webkit-text-stroke:0.12px #111;transform:scaleX(0.8298);transform-origin:left top;">US_SI_0125</div>
<div style="position:absolute;left:207.20px;top:428.90px;font-size:8.5px;line-height:8.5px;height:8.5px;color:#111;font-weight:400;white-space:pre;will-change:transform;-webkit-text-stroke:0.12px #111;transform:scaleX(0.9145);transform-origin:left top;">Professional Containers and Pac...</div>
<div style="position:absolute;left:335.00px;top:428.90px;font-size:8.5px;line-height:8.5px;height:8.5px;color:#111;font-weight:400;white-space:pre;will-change:transform;-webkit-text-stroke:0.12px #111;transform:scaleX(0.8988);transform-origin:left top;">00000223</div>
<div style="position:absolute;left:429.60px;top:428.90px;font-size:8.5px;line-height:8.5px;height:8.5px;color:#111;font-weight:400;white-space:pre;will-change:transform;-webkit-text-stroke:0.12px #111;transform:scaleX(0.9039);transform-origin:left top;">00000223-PTO</div>
<div style="position:absolute;left:652.00px;top:428.90px;font-size:8.5px;line-height:8.5px;height:8.5px;color:#111;font-weight:400;white-space:pre;will-change:transform;-webkit-text-stroke:0.12px #111;transform:scaleX(0.9096);transform-origin:left top;">W00004778</div>
<div style="position:absolute;left:746.50px;top:428.90px;font-size:8.5px;line-height:8.5px;height:8.5px;color:#111;font-weight:400;white-space:pre;will-change:transform;-webkit-text-stroke:0.12px #111;transform:scaleX(0.9101);transform-origin:left top;">Test4</div>
<div style="position:absolute;left:841.40px;top:428.90px;font-size:8.5px;line-height:8.5px;height:8.5px;color:#111;font-weight:400;white-space:pre;will-change:transform;-webkit-text-stroke:0.12px #111;transform:scaleX(0.9587);transform-origin:left top;">AppDev</div>
</body></html>
